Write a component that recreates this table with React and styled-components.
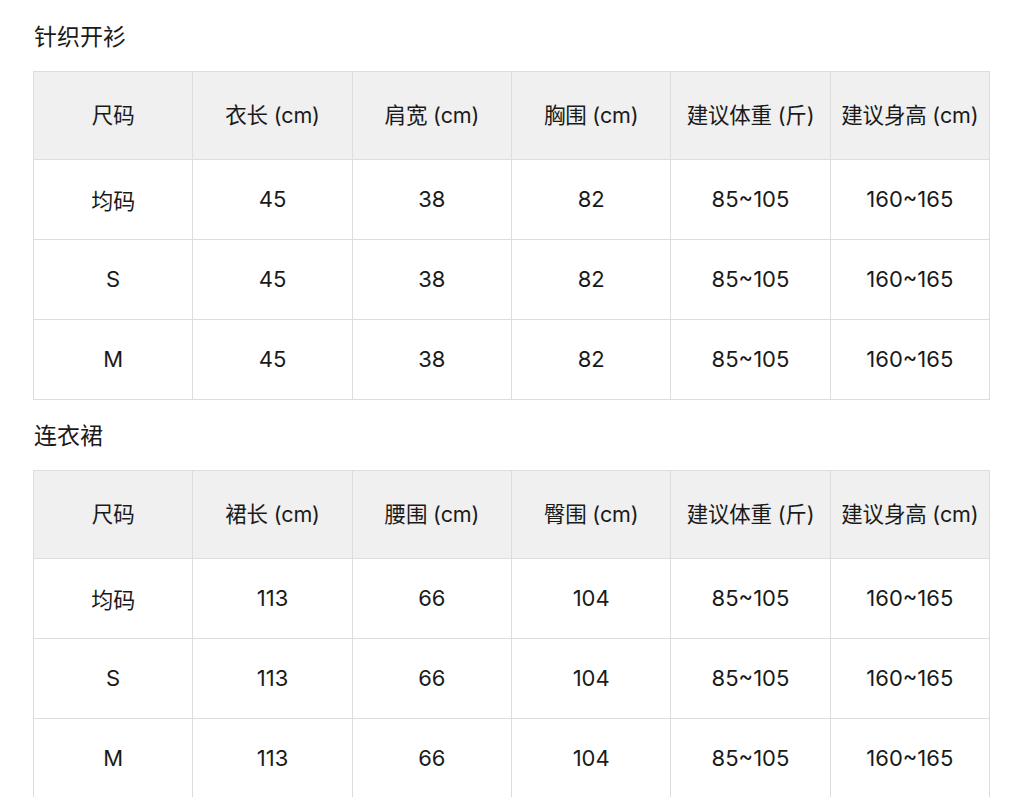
import React from "react";
import styled, { createGlobalStyle } from "styled-components";

const tables = [
  {
    title: "针织开衫",
    head: ["尺码", "衣长 (cm)", "肩宽 (cm)", "胸围 (cm)", "建议体重 (斤)", "建议身高 (cm)"],
    rows: [
      ["均码", "45", "38", "82", "85~105", "160~165"],
      ["S", "45", "38", "82", "85~105", "160~165"],
      ["M", "45", "38", "82", "85~105", "160~165"],
    ],
  },
  {
    title: "连衣裙",
    head: ["尺码", "裙长 (cm)", "腰围 (cm)", "臀围 (cm)", "建议体重 (斤)", "建议身高 (cm)"],
    rows: [
      ["均码", "113", "66", "104", "85~105", "160~165"],
      ["S", "113", "66", "104", "85~105", "160~165"],
      ["M", "113", "66", "104", "85~105", "160~165"],
    ],
  },
];

export default function App() {
  return (
    <>
      <GlobalStyle />
      <SPage>
        {tables.map((t) => (
          <SSection key={t.title}>
            <STitle>{t.title}</STitle>
            <STable>
              <thead>
                <tr>
                  {t.head.map((h) => (
                    <SHeadCell key={h}>{h}</SHeadCell>
                  ))}
                </tr>
              </thead>
              <tbody>
                {t.rows.map((row, i) => (
                  <tr key={i}>
                    {row.map((c, j) => (
                      <SCell key={j}>{c}</SCell>
                    ))}
                  </tr>
                ))}
              </tbody>
            </STable>
          </SSection>
        ))}
      </SPage>
    </>
  );
}

const GlobalStyle = createGlobalStyle`
  body {
    margin: 0;
    background: #ffffff;
    font-family: Inter, "Noto Sans CJK SC", sans-serif;
    color: #1a1a1a;
  }
`;

const SPage = styled.div`
  padding: 22px 34px 0 33px;
  display: flex;
  flex-direction: column;
  gap: 21px;
`;

const SSection = styled.div`
  display: flex;
  flex-direction: column;
  gap: 19px;
`;

const STitle = styled.div`
  font-size: 23px;
  line-height: 30px;
  padding-left: 1px;
`;

const STable = styled.table`
  width: 957px;
  border-collapse: collapse;
  table-layout: fixed;
  border: 1px solid #dddddd;
`;

const SHeadCell = styled.th`
  height: 83px;
  padding: 0 0 4px;
  background: #f0f0f0;
  border: 1px solid #dddddd;
  font-size: 21.5px;
  font-weight: 400;
  letter-spacing: -0.2px;
  text-align: center;
`;

const SCell = styled.td`
  height: 77px;
  padding: 0 0 2px;
  border: 1px solid #dddddd;
  font-size: 22px;
  text-align: center;
`;
